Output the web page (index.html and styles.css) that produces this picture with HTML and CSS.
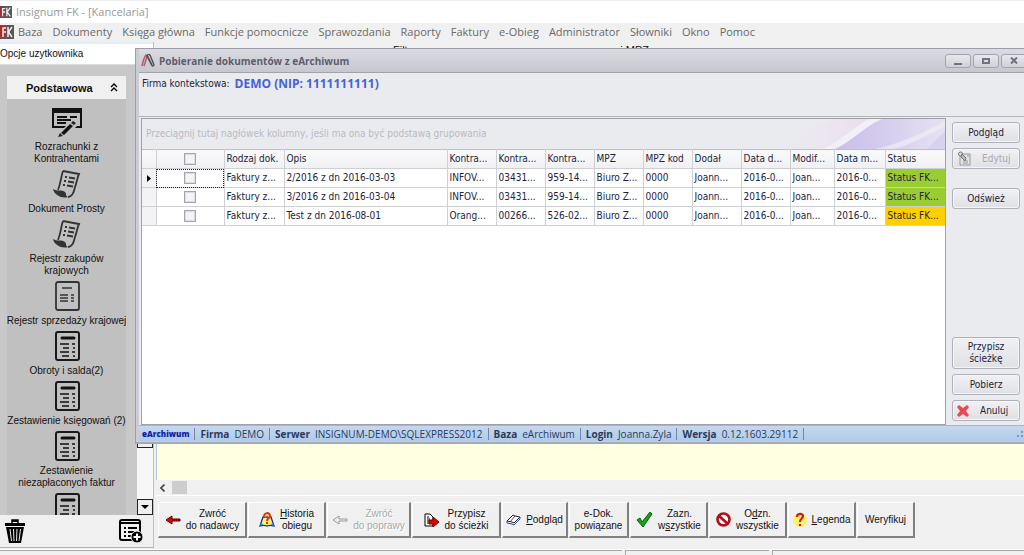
FILE: index.html
```html
<!DOCTYPE html>
<html lang="pl">
<head>
<meta charset="utf-8">
<title>Insignum FK - [Kancelaria]</title>
<link rel="stylesheet" href="styles.css">
</head>
<body>
<svg class="defs" aria-hidden="true">
  <symbol id="logo" viewBox="0 0 14 14"><rect width="14" height="14" fill="#5b5656"/><path d="M0 1h5v11H0z" fill="#a82b2b"/><path d="M3 12V3h3M3 7h3M8 2v10M12 2L8.500 7l3.500 5" fill="none" stroke="#eee" stroke-width="1.500"/></symbol>
  <symbol id="scroll" viewBox="0 0 30 30"><path d="M11 2l16 3c-2 4-2 8-4 13-1 5-3 10-7 10M11 2C9 7 9 14 6 21" fill="none" stroke="#333" stroke-width="1.800"/><path d="M1 20c4 3 9 0 12 3 2 2 0 4 3 5C10 30 2 26 1 20z" fill="#333"/><path d="M13 8h2m2 .5l6 1M12 12h2m2 .5l6 1M11 16h2m2 .5l6 1" stroke="#333" stroke-width="1.800"/></symbol>
  <symbol id="invoice" viewBox="0 0 30 30"><rect x="4" y="1" width="23" height="28" rx="2" fill="none" stroke="#333" stroke-width="1.800"/><path d="M10 7h10M8 14h8M8 17h8M8 20h8M19 14h3M19 17h3M19 20h3" stroke="#333" stroke-width="1.700"/></symbol>
  <symbol id="report" viewBox="0 0 30 30"><rect x="4" y="1" width="23" height="28" rx="2" fill="none" stroke="#1a1a1a" stroke-width="2"/><path d="M10 7h12" stroke="#111" stroke-width="3" stroke-linecap="round"/><path d="M8 13h9M11 17h6M8 21h9M10 25h7M20 13h3M21 17h2M20 21h3M21 25h2" stroke="#111" stroke-width="1.600"/></symbol>
</svg>

<header class="titlebar"><svg class="logo"><use href="#logo"/></svg><span>Insignum FK - [Kancelaria]</span></header>
<nav class="menubar">
  <svg class="logo"><use href="#logo"/></svg>
  <a href="#">Baza</a><a href="#">Dokumenty</a><a href="#">Księga główna</a><a href="#">Funkcje pomocnicze</a><a href="#">Sprawozdania</a><a href="#">Raporty</a><a href="#">Faktury</a><a href="#">e-Obieg</a><a href="#">Administrator</a><a href="#">Słowniki</a><a href="#">Okno</a><a href="#">Pomoc</a>
</nav>

<div class="workspace">
  <aside class="sidebar">
    <div class="sidebar-title">Opcje uzytkownika</div>
    <div class="sidebar-body">
      <div class="group">
        <button class="group-head"><span>Podstawowa</span><svg width="8" height="9" viewBox="0 0 8 9"><path d="M1 4l3-3 3 3M1 8l3-3 3 3" fill="none" stroke="#000" stroke-width="1.400"/></svg></button>
        <div class="items">
          <a class="item" href="#"><svg viewBox="0 0 30 30"><path d="M0 1h30v20h-7l2-2h3V6H2v13h12l-2 2H0z" fill="#111"/><path d="M5 10h10M18 10h7M5 13h14M5 16h9" stroke="#111" stroke-width="1.800"/><path d="M9 26l9-9 3 2-9 9z" fill="#111"/><path d="M6 30l2-4 3 3zM21 14l3 2-2 2-3-2z" fill="#222"/></svg><span>Rozrachunki z<br>Kontrahentami</span></a>
          <a class="item" href="#"><svg><use href="#scroll"/></svg><span>Dokument Prosty</span></a>
          <a class="item" href="#"><svg><use href="#scroll"/></svg><span>Rejestr zakupów<br>krajowych</span></a>
          <a class="item" href="#"><svg><use href="#invoice"/></svg><span>Rejestr sprzedaży krajowej</span></a>
          <a class="item" href="#"><svg><use href="#report"/></svg><span>Obroty i salda(2)</span></a>
          <a class="item" href="#"><svg><use href="#report"/></svg><span>Zestawienie księgowań (2)</span></a>
          <a class="item" href="#"><svg><use href="#report"/></svg><span>Zestawienie<br>niezapłaconych faktur</span></a>
          <a class="item" href="#" aria-label="Raport"><svg><use href="#report"/></svg></a>
        </div>
      </div>
      <div class="vscroll"><button class="thumb" aria-label="Suwak"></button><button class="down" aria-label="Przewiń w dół"><svg width="8" height="4" viewBox="0 0 8 4"><path d="M0 0h8L4 4z"/></svg></button></div>
    </div>
    <div class="sidebar-foot">
      <button aria-label="Usuń"><svg width="20" height="24" viewBox="0 0 20 24"><path d="M0 4h20v3H0zM7 1h6v2H7z"/><path d="M7 4V1h6v3" fill="none" stroke="#000" stroke-width="1.500"/><path d="M1 8h18l-3 16H4z"/><path d="M5 10l1.500 12M8.500 10l.5 12M12 10l-.5 12M15.500 10L14 22" stroke="#eee"/></svg></button>
      <button aria-label="Dodaj"><svg width="24" height="24" viewBox="0 0 24 24"><rect x="1" y="1" width="20" height="20" rx="2" fill="none" stroke="#000" stroke-width="2"/><path d="M1 4h20M5 9h2M9 9h9M5 13h2M9 13h6M5 17h2M9 17h4" stroke="#000" stroke-width="2"/><circle cx="18" cy="18" r="6" stroke="#eee"/><path d="M18 14.500v7M14.500 18h7" stroke="#fff" stroke-width="2"/></svg></button>
    </div>
  </aside>

  <main class="main">
    <div class="filters"><span>Filtr</span><span>i MPZ</span></div>
    <div class="sheet"></div>
    <div class="hscroll"><button aria-label="Przewiń w lewo"><svg width="5" height="8" viewBox="0 0 5 8"><path d="M4.500 .5L1 4l3.500 3.500" fill="none" stroke="#444" stroke-width="1.600"/></svg></button><i></i></div>
    <div class="actions">
      <button class="w90"><svg width="16" height="10" viewBox="0 0 16 10"><path d="M1 5l6-4v3h8v2H7v3z" fill="#e00000" stroke="#500"/></svg><span>Zwróć<br>do nadawcy</span></button>
      <button class="w78"><svg width="16" height="16" viewBox="0 0 16 16"><path d="M4 5L1 14c3-1 5-1 7 0 2-1 4-1 7 0l-3-9z" fill="#fff27a" stroke="#1a2e9a" stroke-width="1.300"/><path d="M1 13l3-1M15 13l-3-1" stroke="#0a9be0"/><path d="M5 5c0-5 6-5 6-1 0 2-3 2-3 5m0 1v2" fill="none" stroke="#e03000" stroke-width="2"/><path d="M6 5c1-2 3-2 4 0" fill="none" stroke="#ffd400"/></svg><span><u>H</u>istoria<br>obiegu</span></button>
      <button class="w84" disabled><svg width="16" height="10" viewBox="0 0 16 10"><path d="M1 5l6-4v3h8v2H7v3z" fill="#eee" stroke="#999"/></svg><span>Zwróć<br>do poprawy</span></button>
      <button class="w90"><svg width="16" height="14" viewBox="0 0 16 14"><path d="M1 1h5l3 3v9H1z" fill="#fff" stroke="#000"/><path d="M3 4h2M3 6h3M3 8h3M3 10h3" stroke="#000"/><path d="M5 7h4V4l6 5-6 5v-3H5z" fill="#e00000" stroke="#700"/></svg><span>Przypisz<br>do ścieżki</span></button>
      <button class="w66"><svg width="15" height="12" viewBox="0 0 15 12"><path d="M1 7l6-6 2 1 5 1-6 6-2-1z" fill="#fff" stroke="#223"/><path d="M1 7v2l5 1 2 1 6-6V3M9 2L4 8" fill="none" stroke="#334a9a"/></svg><span><u>P</u>odgląd</span></button>
      <button class="w60"><span>e-Dok.<br>powiązane</span></button>
      <button class="w78"><svg width="17" height="17" viewBox="0 0 17 17"><path d="M1 9l3-2 2 4 8-10 2 2L7 16z" fill="#13a51d" stroke="#06600c"/></svg><span>Zazn.<br>w<u>s</u>zystkie</span></button>
      <button class="w78"><svg width="15" height="15" viewBox="0 0 15 15"><circle cx="7.500" cy="7.500" r="6" fill="#fff" stroke="#b20d18" stroke-width="2.600"/><path d="M3 4l9 8" stroke="#b20d18" stroke-width="2.600"/></svg><span>O<u>d</u>zn.<br>wszystkie</span></button>
      <button class="w68"><svg width="14" height="16" viewBox="0 0 14 16"><ellipse cx="7" cy="8" rx="7" ry="7" fill="#fff06a"/><path d="M4 5c0-4 6-4 6-1 0 3-3 2-3 6m0 2v2" fill="none" stroke="#c5200c" stroke-width="2.200"/></svg><span><u>L</u>egenda</span></button>
      <button class="w58"><span>Weryfikuj</span></button>
    </div>
  </main>

  <section class="dialog" role="dialog" aria-labelledby="dlg-title">
    <header class="dialog-title">
      <svg width="14" height="13" viewBox="0 0 14 13"><path d="M1 12C2 8 3 3 5 1c1 0 1 2 0 5l-2 6" fill="none" stroke="#b4606a" stroke-width="1.600"/><path d="M6 1l5 10M9 1l4 10c-1 2-2 1-3-1L6 2c1-2 2-2 3-1" fill="none" stroke="#4f5058" stroke-width="1.400"/></svg>
      <h1 id="dlg-title">Pobieranie dokumentów z eArchiwum</h1>
      <div class="win-buttons">
        <button aria-label="Minimalizuj"><svg width="10" height="8" viewBox="0 0 10 8"><path d="M1 7h8" stroke="#70737c" stroke-width="2"/></svg></button>
        <button aria-label="Maksymalizuj"><svg width="8" height="6" viewBox="0 0 8 6"><path d="M1 1h6v4H1z" fill="none" stroke="#70737c" stroke-width="2"/></svg></button>
        <button aria-label="Zamknij"><svg width="8" height="7" viewBox="0 0 8 7"><path d="M1 .5l6 6M7 .5l-6 6" stroke="#70737c" stroke-width="2"/></svg></button>
      </div>
    </header>
    <div class="context"><span>Firma kontekstowa:</span><strong>DEMO (NIP: 1111111111)</strong></div>
    <div class="content">
      <div class="grid">
        <div class="groupbar">
          <svg class="swirl" viewBox="0 0 170 30" preserveAspectRatio="none" aria-hidden="true">
            <defs>
              <linearGradient id="pk"><stop offset="0" stop-color="#f0e6f2" stop-opacity="0"/><stop offset="1" stop-color="#eadbec"/></linearGradient>
              <linearGradient id="vi"><stop offset="0" stop-color="#c9bde8"/><stop offset=".4" stop-color="#d2c9ed"/><stop offset="1" stop-color="#e6e2f3"/></linearGradient>
            </defs>
            <path d="M0 30C20 18 35 6 60 0h44C85 8 70 22 52 30z" fill="url(#pk)"/>
            <path d="M52 30C70 22 85 8 104 0h66v30z" fill="url(#vi)"/>
            <path d="M48 30C66 22 80 7 94 0h13C88 8 78 22 60 30z" fill="#f1f1f5"/>
            <path d="M100 30c25-5 50-17 70-28v5c-18 10-35 19-52 23z" fill="#efedf6" opacity=".7"/>
            <path d="M152 30l18-18v18z" fill="#d3cbec" opacity=".7"/>
          </svg>
          <span>Przeciągnij tutaj nagłówek kolumny, jeśli ma ona być podstawą grupowania</span>
        </div>
        <table>
          <colgroup><col class="c14"><col class="c68"><col class="c60"><col><col class="c49"><col class="c49"><col class="c49"><col class="c49"><col class="c49"><col class="c49"><col class="c49"><col class="c44"><col class="c50"><col class="c60"></colgroup>
          <thead><tr><th></th><th class="mid"><input type="checkbox" aria-label="Zaznacz wszystkie"></th><th>Rodzaj dok.</th><th>Opis</th><th>Kontra...</th><th>Kontra...</th><th>Kontra...</th><th>MPZ</th><th>MPZ kod</th><th>Dodał</th><th>Data d...</th><th>Modif...</th><th>Data m...</th><th>Status</th></tr></thead>
          <tbody>
            <tr><th class="mark"><svg width="4" height="7" viewBox="0 0 4 7"><path d="M0 0l4 3.500L0 7z"/></svg></th><td class="mid focus"><input type="checkbox" aria-label="Zaznacz 2/2016"></td><td>Faktury z...</td><td>2/2016 z dn 2016-03-03</td><td>INFOV...</td><td>03431...</td><td>959-14...</td><td>Biuro Z...</td><td>0000</td><td>Joann...</td><td>2016-0...</td><td>Joan...</td><td>2016-0...</td><td class="green">Status FK...</td></tr>
            <tr><th></th><td class="mid"><input type="checkbox" aria-label="Zaznacz 3/2016"></td><td>Faktury z...</td><td>3/2016 z dn 2016-03-04</td><td>INFOV...</td><td>03431...</td><td>959-14...</td><td>Biuro Z...</td><td>0000</td><td>Joann...</td><td>2016-0...</td><td>Joan...</td><td>2016-0...</td><td class="green">Status FK...</td></tr>
            <tr><th></th><td class="mid"><input type="checkbox" aria-label="Zaznacz Test"></td><td>Faktury z...</td><td>Test z dn 2016-08-01</td><td>Orang...</td><td>00266...</td><td>526-02...</td><td>Biuro Z...</td><td>0000</td><td>Joann...</td><td>2016-0...</td><td>Joan...</td><td>2016-0...</td><td class="gold">Status FK...</td></tr>
          </tbody>
        </table>
      </div>
      <div class="side-buttons">
        <button>Podgląd</button>
        <button class="icon-btn" disabled><svg width="14" height="15" viewBox="0 0 14 15"><path d="M3 3h10v11H3z" fill="#e5e5e8" stroke="#999"/><path d="M6 10h5M6 12h5M10 5h2" stroke="#999"/><circle cx="3.500" cy="3" r="2" fill="#ddd" stroke="#777"/><path d="M5 3l4 4-1 3-4-4z" fill="#bbb" stroke="#777"/></svg><span>Edytuj</span></button>
        <button class="refresh">Odśwież</button>
        <button class="assign">Przypisz<br>ścieżkę</button>
        <button class="get">Pobierz</button>
        <button class="icon-btn"><svg width="12" height="13" viewBox="0 0 12 13"><path d="M2 1l4 3 4-3 2 2-3 4 3 4-2 2-4-3-4 3-2-2 3-4-3-4z" fill="#ea4a55"/></svg><span>Anuluj</span></button>
      </div>
    </div>
    <footer class="dialog-status">
      <span class="brand">eArchiwum</span>
      <span><b>Firma</b>DEMO</span>
      <span><b>Serwer</b>INSIGNUM-DEMO\SQLEXPRESS2012</span>
      <span><b>Baza</b>eArchiwum</span>
      <span><b>Login</b>Joanna.Zyla</span>
      <span><b>Wersja</b>0.12.1603.29112</span>
      <svg class="grip" width="8" height="8" viewBox="0 0 8 8"><path d="M5 1h2v2H5zM1 5h2v2H1zM5 5h2v2H5z" fill="#8296b5"/></svg>
    </footer>
  </section>
</div>
<footer class="appstatus"><i></i><i></i><i></i></footer>
</body>
</html>
```
FILE: styles.css
```css
* { box-sizing: border-box; }
body { margin: 0; min-height: 100vh; display: flex; flex-direction: column; background: #f0f0f0; color: #111; font: 10px/12px "Liberation Sans", Arial, sans-serif; overflow: hidden; }
button { font: inherit; color: inherit; margin: 0; padding: 0; }
a { color: inherit; text-decoration: none; }
svg { display: block; flex: none; }
.defs { position: absolute; width: 0; height: 0; }

.titlebar { display: flex; align-items: center; gap: 4px; height: 23px; background: #fff; border-top: 1px solid #eee; color: #999; font: 11px/16px "Open Sans", "Noto Sans", sans-serif; }
.logo { width: 12px; height: 12px; }
.menubar { display: flex; align-items: center; gap: 10px; height: 19px; padding-bottom: 2px; color: #6a6a6a; font: 11px/16px "Open Sans", "Noto Sans", sans-serif; white-space: nowrap; }
.menubar .logo { width: 14px; height: 14px; margin-right: -6px; }

.workspace { position: relative; display: flex; flex: 1; min-height: 0; }
.sidebar { display: flex; flex-direction: column; width: 154px; height: calc(100vh - 49px); border-right: 1px solid #b5c3d2; border-bottom: 1px solid #a9b4bf; }
.sidebar-title { height: 23px; padding-top: 4px; background: #fff; border-top: 2px solid #e3edf5; border-bottom: 1px solid #ddd; }
.sidebar-body { display: flex; flex: 1; min-height: 0; background: #c8c8c8; }
.group { display: flex; flex-direction: column; flex: 1; min-width: 0; min-height: 0; padding: 11px 11px 0 7px; }
.group-head { display: flex; align-items: center; justify-content: space-between; flex: none; height: 23px; padding: 0 8px 0 19px; background: #f0f0f0; border: 0; font-size: 11px; font-weight: bold; }
.items { flex: 1; min-height: 0; overflow: hidden; padding-top: 8px; background: #c0c0c0; }
.item { display: flex; flex-direction: column; align-items: center; gap: 4px; padding-bottom: 4px; text-align: center; white-space: nowrap; }
.item svg { width: 30px; height: 30px; }
.vscroll { display: flex; flex-direction: column; flex: none; justify-content: space-between; width: 16px; background: #f7f7f7; }
.vscroll button { display: flex; align-items: center; justify-content: center; height: 16px; background: #f0f0f0; border: 1px solid #222; }
.vscroll .thumb { height: 383px; }
.sidebar-foot { display: flex; align-items: center; justify-content: space-between; height: 32px; padding: 0 10px 0 5px; }
.sidebar-foot button { background: none; border: 0; }

.main { display: flex; flex-direction: column; flex: 1; min-width: 0; padding-left: 2px; }
.filters { display: flex; gap: 209px; padding: 2px 0 3px 237px; font-size: 11px; }
.sheet { flex: 1; background: #ffffe1; border-left: 1px solid #b5c3d2; }
.hscroll { display: flex; align-items: stretch; gap: 6px; height: 15px; padding: 1px 0 1px 4px; }
.hscroll button { width: 6px; background: none; border: 0; }
.hscroll i { width: 15px; background: #cdcdcd; }
.actions { display: flex; gap: 1px; height: 54px; padding: 6px 0 11px 2px; border-top: 1px solid #fff; }
.actions button { display: flex; align-items: center; justify-content: center; gap: 5px; background: #f0f0f0; border: 1px solid #fff; border-right: 2px solid #808080; border-bottom: 2px solid #808080; white-space: nowrap; }
.actions button:disabled { color: #aaa; text-shadow: 1px 1px #fff; }
.w90 { width: 89px; } .w84 { width: 84px; } .w78 { width: 78px; } .w68 { width: 68px; }
.w66 { width: 66px; } .w60 { width: 60px; } .w58 { width: 58px; }

.appstatus { display: flex; gap: 3px; height: 6px; border-top: 1px solid #fff; }
.appstatus i { border: 1px solid #a8a8a8; border-width: 1px 0 0 1px; flex: 252; }
.appstatus i:first-child { flex: 626; border-left: 0; }
.appstatus i:nth-child(2) { flex: 144; }

.dialog { position: absolute; left: 135px; right: 0; top: 6px; bottom: 105px; display: flex; flex-direction: column; padding: 0 0 1px 3px; background: #cbccd6; border: 1px solid #9c9da8; border-right: 0; border-bottom: 2px solid #a8a9b2; color: #23233a; font: 10px/14px "DejaVu Sans Condensed", "DejaVu Sans", sans-serif; }
.dialog-title { display: flex; align-items: center; gap: 4px; height: 24px; padding-left: 2px; background: linear-gradient(#dbdce2, #c6c7cf); border-bottom: 1px solid #a1a2aa; color: #5c5e6c; }
.dialog-title h1 { flex: 1; margin: 0; font: bold 10px/14px "Open Sans", sans-serif; }
.win-buttons { display: flex; gap: 2px; margin-right: -3px; }
.win-buttons button { display: flex; align-items: center; justify-content: center; width: 26px; height: 14px; background: linear-gradient(#e8e8ec, #d0d1d8); border: 1px solid #a2a3ad; border-radius: 3px; }
.context { display: flex; gap: 5px; height: 44px; padding: 4px 3px; background: #eaebef; border-bottom: 1px solid #b3b4bb; }
.context strong { color: #4462d8; font: bold 12px/14px "Open Sans", sans-serif; }
.content { display: flex; flex: 1; min-height: 0; gap: 5px; padding: 1px 4px 0 2px; background: #eaebef; }
.grid { display: flex; flex-direction: column; flex: 1; min-width: 0; background: #fff; border: 1px solid #9fa0a8; }
.groupbar { position: relative; display: flex; align-items: center; height: 30px; padding-left: 4px; background: #eaebef; color: #b9bac2; }
.groupbar span { position: relative; }
.swirl { position: absolute; right: 0; top: 0; width: 170px; height: 30px; }
table { width: 100%; table-layout: fixed; border-collapse: collapse; }
th, td { height: 19px; padding: 0 0 0 2px; border: 1px solid #cfd0d6; font-weight: normal; text-align: left; white-space: nowrap; line-height: 14px; }
tr > :first-child { border-left: 0; }
tr > :last-child { border-right: 0; }
thead th { background: linear-gradient(#fafafb, #f0f0f3); border-top-color: #bfc0c8; }
tbody th { background: #f3f3f6; }
th.mid, td.mid { padding: 0; text-align: center; }
.mark svg { margin-left: 3px; }
.focus { outline: 1px dotted #222; outline-offset: -1px; }
.green { background: #9acd32; }
.gold { background: #ffd000; }
.c14 { width: 14px; } .c68 { width: 68px; } .c60 { width: 60px; } .c49 { width: 49px; }
.c44 { width: 44px; } .c50 { width: 51px; }
input[type=checkbox] { appearance: none; display: block; width: 12px; height: 12px; margin: 0 auto; background: #f4f4f6; border: 1px solid #a3a4ac; box-shadow: inset 0 0 0 1px #dcdce2; }
.side-buttons { display: flex; flex-direction: column; width: 69px; padding: 4px 0 4px 1px; }
.side-buttons button { flex: none; height: 21px; background: linear-gradient(#f1f1f4, #dfe0e5); border: 1px solid #b0b1ba; border-radius: 3px; box-shadow: inset 0 0 0 1px #f5f5f8; }
.side-buttons button:disabled { color: #a9a9b1; }
.side-buttons .icon-btn { display: flex; align-items: center; gap: 11px; margin-top: 5px; padding-left: 4px; }
.side-buttons .refresh { margin-top: 19px; }
.side-buttons .assign { height: 32px; margin-top: auto; line-height: 12px; }
.side-buttons .get { margin-top: 5px; }
.dialog-status { display: flex; align-items: center; height: 16px; padding-left: 3px; background: linear-gradient(#c5d8ef, #aecbea); border-top: 1px solid #a5b6cc; color: #2c3a5a; font: 10px/14px "Open Sans", sans-serif; white-space: nowrap; }
.dialog-status span { padding-right: 5px; margin-right: 5px; border-right: 1px solid #6f86a8; line-height: 12px; }
.dialog-status b { margin-right: 5px; }
.dialog-status .brand { color: #1420a8; font: 800 8px/12px "Liberation Sans Narrow", "Open Sans", sans-serif; border-right-color: #6f86a8; }
.grip { margin-left: auto; }
```
